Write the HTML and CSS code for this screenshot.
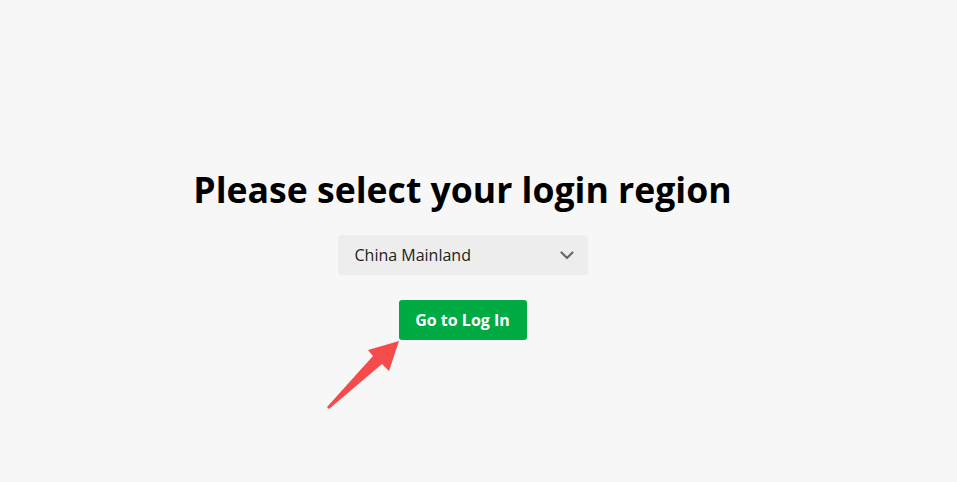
FILE: index.html
```html
<!DOCTYPE html>
<html lang="en">
<head>
<meta charset="utf-8">
<title>Select login region</title>
<link rel="stylesheet" href="styles.css">
</head>
<body>
<main class="page">
  <h1 class="title">Please select your login region</h1>
  <div class="select">
    <span class="select-value">China Mainland</span>
    <svg class="chevron" width="14" height="9" viewBox="0 0 14 9"><path d="M1.5 1.5 L7 7 L12.5 1.5" fill="none" stroke="#6b6b6b" stroke-width="2.2" stroke-linecap="round" stroke-linejoin="round"/></svg>
  </div>
  <button class="btn">Go to Log In</button>
</main>
<svg class="annot-arrow" width="957" height="482" viewBox="0 0 957 482">
  <polygon points="327,407 373,356 368,350 399,341 389,371 382,364 329,409" fill="#f54b4b"/>
</svg>
</body>
</html>
```
FILE: styles.css
```css
html, body {
  margin: 0;
  padding: 0;
  background: #f7f7f7;
  height: 100%;
}
body {
  font-family: "Open Sans", "Noto Sans", sans-serif;
  color: #000;
}
.page {
  width: 925px;
  display: flex;
  flex-direction: column;
  align-items: center;
  padding-top: 162px;
}
.title {
  margin: 0;
  font-size: 35.6px;
  font-weight: 700;
  line-height: 54px;
  letter-spacing: 0;
}
.select {
  margin-top: 19px;
  width: 250px;
  height: 40px;
  box-sizing: border-box;
  background: #ededed;
  border-radius: 4px;
  display: flex;
  align-items: center;
  justify-content: space-between;
  padding: 0 14px 0 17px;
}
.select-value {
  font-size: 16px;
  color: #222;
}
.btn {
  margin-top: 25px;
  height: 40px;
  width: 128px;
  border: none;
  border-radius: 3px;
  background: #00ab44;
  color: #fff;
  font-family: inherit;
  font-size: 16px;
  font-weight: 700;
  padding: 0;
}
.annot-arrow {
  position: absolute;
  left: 0;
  top: 0;
  pointer-events: none;
}
```
